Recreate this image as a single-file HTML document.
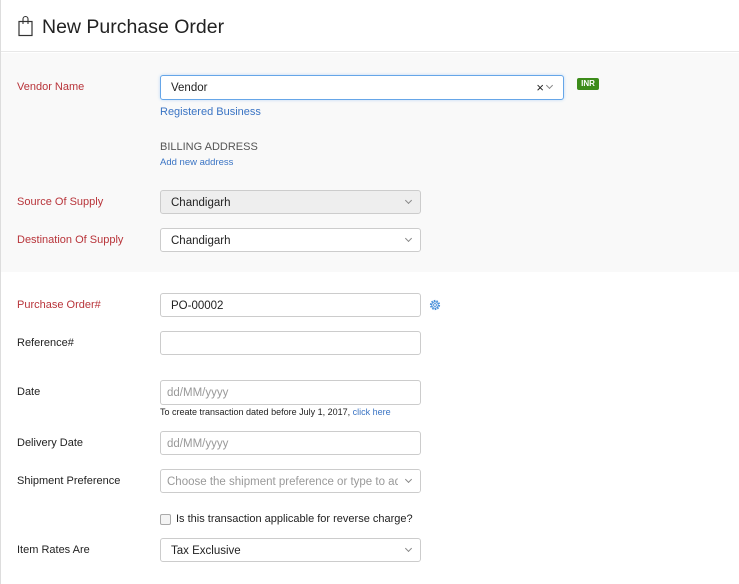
<!DOCTYPE html>
<html><head><meta charset="utf-8"><style>
body{margin:0;width:739px;height:584px;overflow:hidden;background:#fff;font-family:"Liberation Sans",sans-serif;font-size:12px;color:#222;position:relative}
.a{position:absolute}
.hdr{left:0;top:0;width:739px;height:52px;border-bottom:1px solid #e8e8e8;border-left:1px solid #ddd;box-sizing:border-box}
.gray{left:1px;top:53px;width:738px;height:219px;background:#f9f9f9}
.lbl{left:17px;font-size:11px}
.red{color:#b8343a}
.in{left:160px;width:261px;height:24px;border:1px solid #ccc;border-radius:3px;background:#fff;box-sizing:border-box;padding:0 10px;line-height:24px;font-size:11.5px}
.ph{color:#999;padding-left:6px}
.car{position:absolute;right:9px;top:7px;width:4px;height:4px;border-right:1px solid #888;border-bottom:1px solid #888;transform:rotate(45deg)}
.blue{color:#3a74c4}
</style></head><body>
<div class="a hdr"></div>
<svg class="a" style="left:18px;top:15px" width="16" height="22" viewBox="0 0 16 22"><rect x="1" y="6.5" width="13" height="14" fill="none" stroke="#333" stroke-width="1.2"/><path d="M5 9V4a2.5 2.5 0 0 1 5 0v5" fill="none" stroke="#333" stroke-width="1.1"/></svg>
<div class="a" style="left:42px;top:16px;font-size:19.5px;color:#222">New Purchase Order</div>
<div class="a gray"></div>
<div class="a" style="left:0;top:0;width:1px;height:584px;background:#ddd"></div>

<div class="a lbl red" style="top:81px">Vendor Name</div>
<div class="a in" style="top:75px;width:404px;border-color:#66a6e8;box-shadow:0 0 3px #bcd8f5;height:25px">Vendor<span style="position:absolute;right:19px;top:0;font-size:13px">×</span><div class="car" style="right:11px"></div></div>
<div class="a" style="left:577px;top:78px;width:22px;height:12px;background:#3d8c1a;border-radius:2px;color:#fff;font-size:8px;font-weight:bold;text-align:center;line-height:12px">INR</div>
<div class="a blue" style="left:160px;top:106px;font-size:11px">Registered Business</div>
<div class="a" style="left:160px;top:141px;font-size:11px;color:#555">BILLING ADDRESS</div>
<div class="a blue" style="left:160px;top:157px;font-size:9.5px">Add new address</div>

<div class="a lbl red" style="top:196px">Source Of Supply</div>
<div class="a in" style="top:190px;background:#eee">Chandigarh<div class="car"></div></div>
<div class="a lbl red" style="top:234px">Destination Of Supply</div>
<div class="a in" style="top:228px">Chandigarh<div class="car"></div></div>

<div class="a lbl red" style="top:299px">Purchase Order#</div>
<div class="a in" style="top:293px">PO-00002</div>
<svg class="a" style="left:429px;top:299px" width="12" height="12" viewBox="0 0 12 12"><circle cx="6" cy="6" r="4.3" fill="none" stroke="#4a90d9" stroke-width="1.6" stroke-dasharray="1.6 1.1"/><circle cx="6" cy="6" r="3.2" fill="#fff" stroke="#4a90d9" stroke-width="0.9"/><circle cx="6" cy="6" r="1.4" fill="none" stroke="#4a90d9" stroke-width="0.9"/></svg>
<div class="a lbl" style="top:337px">Reference#</div>
<div class="a in" style="top:331px"></div>

<div class="a lbl" style="top:386px">Date</div>
<div class="a in ph" style="top:380px;height:25px">dd/MM/yyyy</div>
<div class="a" style="left:160px;top:407px;font-size:9px">To create transaction dated before July 1, 2017, <span class="blue">click here</span></div>
<div class="a lbl" style="top:437px">Delivery Date</div>
<div class="a in ph" style="top:431px">dd/MM/yyyy</div>
<div class="a lbl" style="top:475px">Shipment Preference</div>
<div class="a in ph" style="top:469px;overflow:hidden;white-space:nowrap;padding-right:22px;text-overflow:clip">Choose the shipment preference or type to add<div class="a" style="right:0;top:0;width:22px;height:22px;background:#fff"></div><div class="car"></div></div>
<div class="a" style="left:160px;top:514px;width:9px;height:9px;border:1px solid #aaa;border-radius:2px;background:#f4f4f4"></div>
<div class="a" style="left:176px;top:513px;font-size:11px">Is this transaction applicable for reverse charge?</div>
<div class="a lbl" style="top:544px">Item Rates Are</div>
<div class="a in" style="top:538px">Tax Exclusive<div class="car"></div></div>
</body></html>
